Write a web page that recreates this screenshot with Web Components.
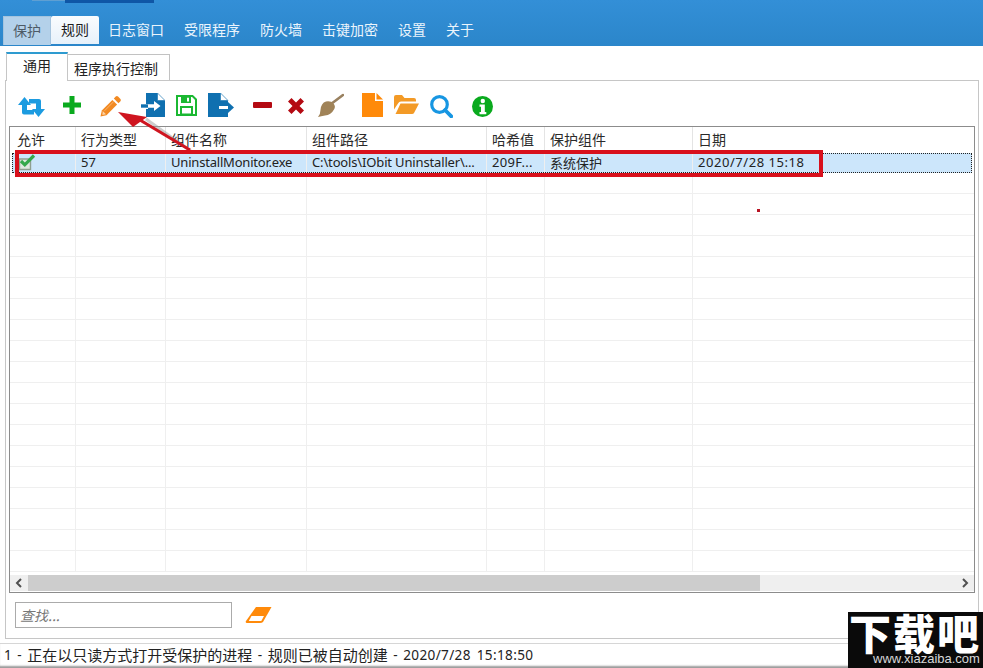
<!DOCTYPE html>
<html lang="zh">
<head>
<meta charset="utf-8">
<style>
html,body{margin:0;padding:0;background:#fff;overflow:hidden}
body{width:983px;height:668px;font:14px "Liberation Sans","Noto Sans CJK SC",sans-serif;color:#222}
</style>
</head>
<body>
<rule-app></rule-app>
<script>
function def(name, html){
  customElements.define(name, class extends HTMLElement{
    constructor(){super();this.attachShadow({mode:'open'}).innerHTML=typeof html==='function'?html(this):html;}
  });
}
const FONT='"Noto Sans","Noto Sans CJK SC",sans-serif';
const CJK='"Noto Sans CJK SC",sans-serif';

def('menu-item',`<style>
:host{display:flex;align-items:center;justify-content:center;padding:0 11px 3px 9px;height:28px;color:#eaf4fc;font:14px ${CJK};box-sizing:border-box;white-space:nowrap}
:host([state=pressed]){width:48px;height:29px;padding:0 0 3px;color:#4d5a66;background:#b4d1ea;border:1px solid #a5c4de;border-bottom:0}
:host([state=active]){width:48px;padding:0 0 3px;color:#1c1c1c;background:linear-gradient(#fafcfe,#e7f1fa);border-radius:2px 2px 0 0}
</style><slot></slot>`);

def('menu-bar',`<style>
:host{display:flex;align-items:flex-start;height:46px;box-sizing:border-box;padding:16px 0 0 3px;background:linear-gradient(#338fd7,#2b86ca);flex:none;position:relative}
.a{position:absolute;left:32px;top:0;width:33px;height:1px;background:#5f9fd2}
.b{position:absolute;left:65px;top:0;width:89px;height:3px;background:#0f56a6}
</style><span class="a"></span><span class="b"></span><slot></slot>`);

def('page-tab',`<style>
:host{display:flex;align-items:center;box-sizing:border-box;font:14px ${CJK};color:#222;white-space:nowrap;background:#fff}
:host([active]){width:62px;height:29px;justify-content:center;border-top:2px solid #2e9bd0;border-left:1px solid #c6c6c6;border-right:1px solid #c6c6c6;margin-bottom:-1px;position:relative;z-index:1;padding-bottom:6px}
:host(:not([active])){width:102px;height:26px;padding:0 0 0 6px;border:1px solid #c2c2c2;border-left:0;border-bottom:0}
</style><slot></slot>`);

def('tab-strip',`<style>
:host{display:flex;align-items:flex-end;height:34px;padding:6px 0 0 6px;box-sizing:border-box;flex:none}
</style><slot></slot>`);

const ICONS={
repeat:[27,20,`<path d="M6.500 0L13 8H9v5h7v4.500H6q-2 0-2-2V8H0z" fill="#1c9be0"/><path d="M20.500 20L14 12h4V6.500h-7V2H21q2 0 2 2v8h4z" fill="#1c9be0"/>`],
plus:[18,18,`<path d="M6.500 0h5v6.500H18v5h-6.500V18h-5v-6.500H0v-5h6.500z" fill="#0aaa1e"/>`],
pencil:[21,21,`<path d="M15.500.8a2 2 0 0 1 2.800 0l1.900 1.900a2 2 0 0 1 0 2.800l-1.700 1.700-4.700-4.700z" fill="#f28a22"/><path d="M12.400 3.900l4.700 4.700L6.500 19.200.500 20.500l1.300-6z" fill="#f28a22"/><path d="M2.700 15l3.300 3.300-3.600.7z" fill="#fbd2a6"/><path d="M13.800 5.500L4.500 14.800" stroke="#fbc48c" stroke-width=".7" fill="none"/>`],
importf:[24,24,`<path d="M5 0h11l8 8v16H5V16h2v-5H5z" fill="#0f70b0"/><path d="M16.500 0L24 7.500h-7.500z" fill="#fff" stroke="#0f70b0" stroke-width=".6"/><path d="M7 11.300h6V8l6.500 5-6.500 5v-3.300H7z" fill="#fff"/><path d="M0 11.300h7v3.400H0z" fill="#0f70b0"/>`],
save:[21,21,`<path d="M1 1h15.500L20 4.500V20H1z" fill="#fff" stroke="#1bb832" stroke-width="2"/><path d="M5 1.500h10v6.500H5z" fill="#1bb832"/><path d="M11 2.800h2v3.800h-2z" fill="#fff"/><path d="M5 12h11v7.500H5z" fill="none" stroke="#1bb832" stroke-width="2"/>`],
exportf:[26,24,`<path d="M0 0h12l8 8v5h-9v3h9v8H0z" fill="#0f70b0"/><path d="M12.500 0L20 7.500h-7.500z" fill="#fff" stroke="#0f70b0" stroke-width=".6"/><path d="M20 9l6 5.500-6 5.500z" fill="#0f70b0"/><path d="M11 13h9v3h-9z" fill="#fff"/>`],
minus:[19,6,`<rect width="19" height="6" rx="1" fill="#b40a12"/>`],
cross:[16,16,`<path d="M3.500 0L8 4.500 12.500 0 16 3.500 11.500 8 16 12.500 12.500 16 8 11.500 3.500 16 0 12.500 4.500 8 0 3.500z" fill="#b40a12"/>`],
broom:[26,24,`<path d="M13 11L25 2" stroke="#998160" stroke-width="2.600" stroke-linecap="round" fill="none"/><path d="M8 8.500q5-.8 7.500 2t.5 6q-3 5.500-9 6Q3 23 0 24q2.500-3 2.500-7Q3 10 8 8.500z" fill="#a08358"/>`],
file:[21,24,`<path d="M0 0h13v8h8v16H0z" fill="#ff8a0a"/><path d="M14.500 0L21 6.500h-6.500z" fill="#ff8a0a"/>`],
folder:[25,19,`<path d="M0 14.500V2Q0 0 2 0h6l2.500 3H20q2 0 2 2v1.500H7q-2 0-3 2z" fill="#f39a26"/><path d="M6.500 8.500H25L20 18q-.5 1-2 1H1.500L3 16z" fill="#f39a26"/>`],
search:[23,23,`<circle cx="9.500" cy="9.500" r="7.800" fill="none" stroke="#1796e2" stroke-width="3.200"/><path d="M15 15l6.300 6.300" stroke="#1796e2" stroke-width="3.800" stroke-linecap="round"/>`],
info:[21,21,`<circle cx="10.500" cy="10.500" r="10.500" fill="#0aaa1e"/><circle cx="10.800" cy="5" r="2.200" fill="#fff"/><path d="M7.500 8.500h5.300v7.500h1.500v2.200H7.500V16H9v-5.300H7.500z" fill="#fff"/>`]
};
def('tool-icon',h=>{const [w,ht,p]=ICONS[h.getAttribute('name')];return `<style>:host{display:block;flex:none;line-height:0}svg{display:block}</style><svg width="${w}" height="${ht}" viewBox="0 0 ${w} ${ht}">${p}</svg>`;});

def('tool-bar',`<style>
:host{display:flex;align-items:flex-start;height:45px;flex:none;box-sizing:border-box}
</style><slot></slot>`);

const COLS=[66,90,141,180,58,148,281];
const colTpl=COLS.map(w=>w+'px').join(' ');
def('table-head',`<style>
:host{display:grid;grid-template-columns:${colTpl};height:25px;flex:none;box-sizing:border-box;font:14px ${CJK};color:#2a2a2a}
</style><slot></slot>`);
def('head-cell',`<style>
:host{display:block;box-sizing:border-box;padding:2px 0 0 5px;border-right:1px solid #e4e4e4;white-space:nowrap;overflow:hidden}
:host(:first-child){padding-left:7px}
:host(:last-child){border-right:0}
</style><slot></slot>`);
def('table-row',`<style>
:host{display:grid;grid-template-columns:${colTpl};height:21px;flex:none;box-sizing:border-box;border-bottom:1px solid #efefef;font:13px ${FONT};color:#222}
:host([selected]){background:#cce6fb;outline:1px dotted #222;outline-offset:-1px;margin:1px 2px 0 2px;grid-template-columns:64px 90px 141px 180px 58px 148px 279px;height:20px;border-bottom:0}
</style><slot></slot>`);
def('row-cell',`<style>
:host{display:flex;align-items:center;box-sizing:border-box;padding:0 0 2px 5px;border-right:1px solid #efefef;white-space:nowrap;overflow:hidden;height:20px}
:host(:first-child){padding-left:6px}
:host(:last-child){border-right:0}
</style><slot></slot>`);

def('check-mark',`<style>:host{display:block;line-height:0;margin:1px 0 0 0}</style>
<svg width="18" height="17" viewBox="0 0 18 17"><path d="M1.500 5h11v10.500h-11z" fill="#dfe8df" stroke="#8f9f90" stroke-width="1.400"/><path d="M3 7l3.800 3.800L16 1.500" fill="none" stroke="#35a84a" stroke-width="3.200"/></svg>`);

def('h-scroll',`<style>
:host{display:flex;height:16px;flex:none;background:#efefef;margin-top:auto;margin-bottom:1px}
.btn{width:18px;display:flex;align-items:center;justify-content:center;flex:none}
.t{width:732px;background:#cdcdcd;flex:none}
.f{flex:1}
</style>
<span class="btn"><svg width="8" height="10" viewBox="0 0 8 10"><path d="M6 1L2 5l4 4" fill="none" stroke="#505050" stroke-width="2"/></svg></span>
<span class="t"></span><span class="f"></span>
<span class="btn"><svg width="8" height="10" viewBox="0 0 8 10"><path d="M2 1l4 4-4 4" fill="none" stroke="#505050" stroke-width="2"/></svg></span>`);

def('rule-table',`<style>
:host{display:flex;flex-direction:column;height:467px;margin:0 3px 0 3px;box-sizing:border-box;border:1px solid #8c8c8c;overflow:hidden;background:#fff;flex:none}
</style><slot></slot>`);

def('search-box',`<style>
:host{display:flex;align-items:center;gap:13px;flex:none;padding:9px 0 0 9px}
.i{width:217px;height:26px;box-sizing:border-box;border:1px solid #ababab;padding:0 0 0 4px;display:flex;align-items:center;color:#777;font:italic 14px ${CJK}}
</style><span class="i"><slot></slot></span>
<svg width="27" height="18" viewBox="0 0 27 18"><path d="M11 1H26.500L18 16Q17 17 15 17H2Q0 17 1 15Z" fill="#ff8a0a"/><path d="M6.500 10H19L16.300 15H3.800Z" fill="#fff"/></svg>`);

def('main-panel',`<style>
:host{display:flex;flex-direction:column;box-sizing:border-box;margin:0 4px 0 5px;border:1px solid #c6c6c6;height:559px;flex:none}
</style><slot></slot>`);

def('status-bar',`<style>
:host{display:flex;align-items:center;flex:none;height:25px;box-sizing:border-box;margin-top:4px;padding:0 0 3px 4px;border-top:1px solid #d6d6d6;font:13.600px ${FONT};word-spacing:2px;color:#222;white-space:pre;box-shadow:inset 0 -3px 2px -1px #9a9a9a}
</style><slot></slot>`);
def('cjk-text',`<style>:host{font:15px ${CJK}}</style><slot></slot>`);
def('stamp-text',`<style>:host{letter-spacing:.35px}</style><slot></slot>`);

def('water-mark',`<style>
:host{position:absolute;left:848px;top:612px;width:135px;height:56px;background:#0a0a0a;color:#fff;display:block}
.l{position:absolute;left:1px;top:0;font:900 42px/40px ${CJK};letter-spacing:2px;white-space:nowrap}
.u{position:absolute;left:25px;top:39px;font:13px/15px "Liberation Sans",sans-serif;color:#d8d8d8;white-space:nowrap}
</style><span class="l">下载吧</span><span class="u">www.xiazaiba.com</span>`);

def('mark-up',`<style>
:host{position:absolute;left:0;top:0;width:983px;height:668px;pointer-events:none;display:block}
.box{position:absolute;left:15px;top:150px;width:808px;height:27px;box-sizing:border-box;border:4px solid #d8101c}
.dot{position:absolute;left:757px;top:209px;width:3px;height:3px;background:#b81424}
svg{position:absolute;left:0;top:0}
</style>
<svg width="983" height="668" viewBox="0 0 983 668">
<path d="M146 119l46 33" stroke="#999" stroke-width="3" opacity=".5" fill="none"/>
<path d="M190 150L140 120" stroke="#cf1520" stroke-width="3.200" fill="none"/>
<path d="M118 112L147 117 133 127z" fill="#cf1520"/>
</svg>
<span class="box"></span><span class="dot"></span>`);

const rowHtml=[];
for(let i=0;i<19;i++) rowHtml.push('<table-row>'+COLS.map(()=>'<row-cell></row-cell>').join('')+'</table-row>');
const tools=[['repeat',12,16],['plus',18,15],['pencil',19,15],['importf',20,12],['save',11,14],['exportf',11,12],['minus',19,21],['cross',16,17],['broom',14,12],['file',18,12],['folder',11,14],['search',11,14],['info',19,15]];
def('rule-app',`<style>
:host{display:flex;flex-direction:column;width:983px;height:668px;position:relative;overflow:hidden;background:#fff}
</style>
<menu-bar>
<menu-item state="pressed">保护</menu-item><menu-item state="active">规则</menu-item><menu-item>日志窗口</menu-item><menu-item>受限程序</menu-item><menu-item>防火墙</menu-item><menu-item>击键加密</menu-item><menu-item>设置</menu-item><menu-item>关于</menu-item>
</menu-bar>
<tab-strip><page-tab active>通用</page-tab><page-tab>程序执行控制</page-tab></tab-strip>
<main-panel>
<tool-bar>${tools.map(([n,g,t])=>`<tool-icon name="${n}" style="margin:${t}px 0 0 ${g}px"></tool-icon>`).join('')}</tool-bar>
<rule-table>
<table-head><head-cell>允许</head-cell><head-cell>行为类型</head-cell><head-cell>组件名称</head-cell><head-cell>组件路径</head-cell><head-cell>哈希值</head-cell><head-cell>保护组件</head-cell><head-cell>日期</head-cell></table-head>
<table-row selected><row-cell><check-mark></check-mark></row-cell><row-cell>57</row-cell><row-cell style="letter-spacing:-.2px">UninstallMonitor.exe</row-cell><row-cell style="letter-spacing:-.15px">C:\\tools\\IObit Uninstaller\\...</row-cell><row-cell style="letter-spacing:.3px">209F...</row-cell><row-cell style="font-family:${CJK};font-size:14px">系统保护</row-cell><row-cell style="letter-spacing:.55px">2020/7/28 15:18</row-cell></table-row>
${rowHtml.join('')}
<h-scroll></h-scroll>
</rule-table>
<search-box>查找...</search-box>
</main-panel>
<status-bar>1 - <cjk-text>正在以只读方式打开受保护的进程</cjk-text> - <cjk-text>规则已被自动创建</cjk-text> - <stamp-text>2020/7/28 15:18:50</stamp-text></status-bar>
<mark-up></mark-up>
<water-mark></water-mark>`);
</script>
</body>
</html>
